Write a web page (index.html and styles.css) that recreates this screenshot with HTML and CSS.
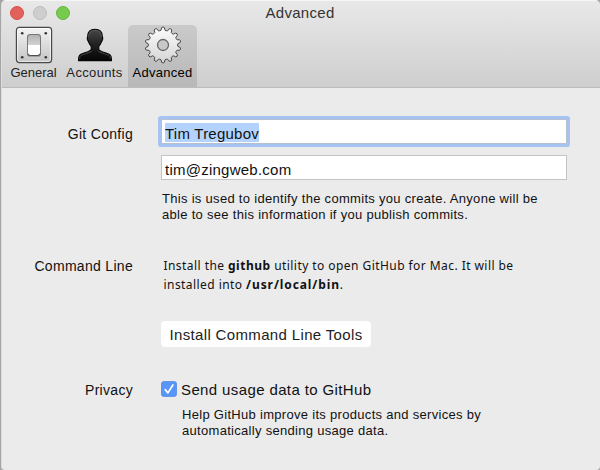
FILE: index.html
```
<!DOCTYPE html>
<html lang="en">
<head>
<meta charset="utf-8">
<title>Advanced</title>
<link rel="stylesheet" href="styles.css">
</head>
<body>
<div class="window">
  <header class="toolbar">
    <div class="titlebar">
      <div class="lights"><i class="light close"></i><i class="light minimize"></i><i class="light zoom"></i></div>
      <h1 class="title">Advanced</h1>
    </div>
    <nav class="tabs">
      <div class="tab general">
        <svg class="icon" viewBox="0 0 38 38">
          <defs>
            <linearGradient id="plate" x1="0" y1="0" x2="0" y2="1"><stop offset="0" stop-color="#f4f4f4"/><stop offset="1" stop-color="#c4c4c4"/></linearGradient>
            <linearGradient id="knob" x1="0" y1="0" x2="0" y2="1"><stop offset="0" stop-color="#b2b2b2"/><stop offset=".48" stop-color="#d2d2d2"/><stop offset=".5" stop-color="#fff"/><stop offset="1" stop-color="#fff"/></linearGradient>
          </defs>
          <rect x="1.4" y="1.4" width="35.2" height="35.2" rx="3" fill="url(#plate)" stroke="#484848" stroke-width="1.2"/>
          <rect x="2.6" y="2.6" width="32.8" height="32.8" rx="2" fill="none" stroke="#fff" stroke-opacity=".65"/>
          <g fill="#333"><circle cx="7.2" cy="7.2" r="1.3"/><circle cx="30.8" cy="7.2" r="1.3"/><circle cx="7.2" cy="31.3" r="1.3"/><circle cx="30.8" cy="31.3" r="1.3"/></g>
          <rect x="12" y="8" width="14" height="22.6" rx="3.2" fill="#777"/>
          <rect x="13" y="9" width="12" height="20" rx="2.4" fill="url(#knob)"/>
          <path d="M13.3 28.2c.5 1 1 1.3 2 1.3h7.4c1 0 1.500-.3 2-1.300" fill="none" stroke="#444" stroke-width=".8"/>
        </svg>
        <span>General</span>
      </div>
      <div class="tab accounts">
        <svg class="icon" viewBox="0 0 38 38">
          <defs><linearGradient id="person" x1="0" y1="0" x2="0" y2="1"><stop offset="0" stop-color="#484848"/><stop offset=".5" stop-color="#202020"/><stop offset="1" stop-color="#050505"/></linearGradient></defs>
          <path d="M19 3.200C23.600 3.200 26.300 5.800 26.300 10.200C26.300 11.400 27 11.500 26.700 13C26.500 14.400 25.900 14.800 25.500 15.700C25 17.700 24 19 22.800 20.300V23.400C23.400 25.600 30.500 26.900 33.500 28.500C35.400 29.700 35.500 32 35.500 34.600H2.500C2.500 32 2.600 29.700 4.500 28.500C7.500 26.900 14.600 25.600 15.200 23.400V20.300C14 19 13 17.700 12.500 15.700C12.100 14.800 11.500 14.400 11.300 13C11 11.500 11.700 11.400 11.700 10.200C11.700 5.800 14.400 3.200 19 3.200Z" fill="url(#person)" stroke="#050505" stroke-width="1.100"/>
          <path d="M12.600 11C12.500 6.500 15 4.400 19 4.400S25.500 6.500 25.400 11M3.700 33C3.700 30.900 4 29.900 5.100 29.400C9 27.500 14.500 26.900 16 24.700M22 24.700C23.500 26.900 29 27.500 32.900 29.400C34 29.900 34.300 30.900 34.300 33" fill="none" stroke="#6a6a6a" stroke-width=".6"/>
        </svg>
        <span>Accounts</span>
      </div>
      <div class="tab selected">
        <svg class="icon" viewBox="0 0 38 38">
          <defs>
            <linearGradient id="metal" gradientUnits="userSpaceOnUse" x1="0" y1="1" x2="0" y2="37"><stop offset="0" stop-color="#fcfcfc"/><stop offset="1" stop-color="#d5d5d5"/></linearGradient>
          </defs>
          <path id="cog" fill="url(#metal)" stroke="#484848" stroke-width="1" stroke-linejoin="round"/>
          <circle cx="19" cy="19" r="5.500" fill="#c9c8c9" stroke="#666" stroke-width="1.300"/>
        </svg>
        <span>Advanced</span>
      </div>
    </nav>
  </header>
  <main class="content">
    <section class="row git">
      <h2 class="label">Git Config</h2>
      <div class="fields">
        <div class="field focused"><span class="selection">Tim Tregubov</span></div>
        <div class="field email">tim@zingweb.com</div>
        <p class="help">This is used to identify the commits you create. Anyone will be<br>able to see this information if you publish commits.</p>
      </div>
    </section>
    <section class="row command">
      <h2 class="label">Command Line</h2>
      <div class="fields">
        <p class="install">Install the <b>github</b> utility to open GitHub for Mac. It will be<br>installed into <b class="path">/usr/local/bin</b>.</p>
        <button class="button" type="button">Install Command Line Tools</button>
      </div>
    </section>
    <section class="row privacy">
      <h2 class="label">Privacy</h2>
      <div class="fields">
        <div class="check-line">
          <svg class="checkbox" viewBox="0 0 16 16"><rect x=".4" y=".4" width="15.200" height="15.200" rx="2.800" fill="#5795f6" stroke="#437fe3" stroke-width=".7"/><path d="M4.200 8.600L6.900 11.900L11.900 4" fill="none" stroke="#fff" stroke-width="1.700" stroke-linecap="round" stroke-linejoin="round"/></svg>
          <span class="check-label">Send usage data to GitHub</span>
        </div>
        <p class="help privacy-help">Help GitHub improve its products and services by<br>automatically sending usage data.</p>
      </div>
    </section>
  </main>
</div>
<script src="gear.js"></script>
</body>
</html>
```
FILE: gear.js
```
// Outline of a fourteen-toothed gear centred in the 38-unit icon box.
const teeth = 14;
const profile = [[-0.5, 14.6], [-0.29, 15], [-0.18, 17.4], [0, 18], [0.18, 17.4], [0.29, 15]];
const points = [];
for (let i = 0; i < teeth; i++) {
  for (const [offset, radius] of profile) {
    const angle = (i + offset) * 2 * Math.PI / teeth;
    points.push((19 + radius * Math.sin(angle)).toFixed(2) + " " + (19 - radius * Math.cos(angle)).toFixed(2));
  }
}
document.getElementById("cog").setAttribute("d", "M" + points.join("L") + "Z");
```
FILE: styles.css
```
* { box-sizing: border-box; }
body { margin: 0; background: #a6a5a6; font-family: "Liberation Sans", Arial, sans-serif; color: #111; }
h1, h2, p { margin: 0; font-weight: 400; }
.window { width: 599px; height: 470px; margin-left: 1px; overflow: hidden; border-radius: 5px 5px 4px 4px; background: #ebebeb; border-left: 1px solid #dedede; }
.toolbar { height: 88px; background: linear-gradient(#e9e8e9, #e2e1e2 28%, #cfcecf); border-top: 1px solid #f5f5f5; border-bottom: 1px solid #bdbcbd; }
.titlebar { height: 24px; display: grid; grid-template-columns: 68px 1fr 68px; }
.lights { display: flex; gap: 9px; padding: 5px 0 0 8px; }
.light { width: 14px; height: 14px; flex: none; border-radius: 50%; border: 1px solid #d64f49; background: #e2615a; }
.minimize { background: #cfcecf; border-color: #bebdbe; }
.zoom { background: #76cb4e; border-color: #61b83c; }
.title { text-align: center; font-size: 15px; line-height: 24px; letter-spacing: .3px; color: #333; padding-right: 2px; }
.tabs { display: flex; height: 62px; padding-left: 4px; }
.tab { display: flex; flex-direction: column; align-items: center; font-size: 13px; line-height: 16px; color: #222; }
.general { width: 55px; }
.accounts { width: 67px; letter-spacing: .35px; }
.selected { width: 69px; background: linear-gradient(#cbcacb, #b9b8b9); border-radius: 5px 5px 0 0; color: #000; letter-spacing: .25px; }
.icon { width: 38px; height: 38px; margin-top: 1px; }
.tab span { margin-top: 1px; white-space: nowrap; }
.content { padding-top: 31px; }
.row { display: grid; grid-template-columns: 131px 1fr; column-gap: 28px; }
.label { text-align: right; font-size: 14px; letter-spacing: .3px; line-height: 20px; white-space: nowrap; }
.git .label { padding-top: 5px; }
.field { width: 406px; height: 25px; border: 1px solid #c4c4c4; background: #fff; padding: 3px 3px 0; font-size: 15px; line-height: 22px; letter-spacing: .24px; }
.focused { border-color: #b5bfd0; box-shadow: 0 0 0 3px #a6c3f1; border-radius: 1px; }
.selection { display: inline-block; height: 19px; line-height: 21px; background: #b3d3fd; }
.email { margin-top: 11px; }
.help { font-size: 13px; letter-spacing: .3px; line-height: 16px; white-space: nowrap; margin-top: 11px; padding-left: 1px; }
.install { font-family: "Noto Sans", sans-serif; font-size: 12px; letter-spacing: .44px; line-height: 18.5px; white-space: nowrap; padding: 1px 0 0 2.5px; }
.install b { letter-spacing: .5px; }
.install .path { letter-spacing: .9px; }
.git { height: 137px; }
.command { height: 124px; }
.button { width: 210px; height: 26px; margin-top: 27px; padding: 1px 0 0; border: 0; border-radius: 4px; background: #fff; font: 15px "Liberation Sans", Arial, sans-serif; letter-spacing: .35px; color: #222; }
.check-line { display: flex; gap: 4px; font-size: 15px; line-height: 19px; letter-spacing: .38px; }
.checkbox { width: 16px; height: 16px; margin-top: 1px; }
.privacy .help { margin: 8px 0 0 20px; }
```
